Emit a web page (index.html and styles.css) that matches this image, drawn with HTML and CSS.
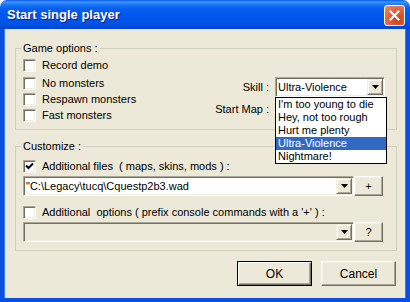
FILE: index.html
```html
<!DOCTYPE html>
<html lang="en">
<head>
    <meta charset="utf-8">
    <title>Start single player</title>
    <link rel="stylesheet" href="styles.css">
</head>
<body>
    <div class="window">
        <div class="titlebar">
            <span class="title">Start single player</span>
            <button class="close" aria-label="Close">
                <svg width="11" height="11" viewBox="0 0 11 11"><path d="M1.5 1.5l8 8M9.5 1.5l-8 8" stroke="#fff" stroke-width="2" stroke-linecap="square"/></svg>
            </button>
        </div>

        <div class="dialog">
            <fieldset class="group game">
                <legend>Game options :</legend>
                <div class="game-row">
                    <div class="checks">
                        <label class="check first"><span class="box"></span>Record demo</label>
                        <label class="check"><span class="box"></span>No monsters</label>
                        <label class="check"><span class="box"></span>Respawn monsters</label>
                        <label class="check"><span class="box"></span>Fast monsters</label>
                    </div>
                    <div class="settings">
                        <span class="setting-label">Skill :</span>
                        <div class="combo skill">
                            <span class="combo-text">Ultra-Violence</span>
                            <span class="arrow-btn"><svg width="7" height="4" viewBox="0 0 7 4"><path d="M0 0h7L3.5 4z"/></svg></span>
                            <ul class="droplist">
                                <li>I'm too young to die</li>
                                <li>Hey, not too rough</li>
                                <li>Hurt me plenty</li>
                                <li class="selected">Ultra-Violence</li>
                                <li>Nightmare!</li>
                            </ul>
                        </div>
                        <span class="setting-label">Start Map :</span>
                        <div class="combo skill">
                            <span class="combo-text"></span>
                            <span class="arrow-btn"><svg width="7" height="4" viewBox="0 0 7 4"><path d="M0 0h7L3.5 4z"/></svg></span>
                        </div>
                    </div>
                </div>
            </fieldset>

            <fieldset class="group custom">
                <legend>Customize :</legend>
                <label class="check"><span class="box"><svg width="11" height="11" viewBox="0 0 11 11"><path d="M2 4.5l2.5 2.5 4.5-4.5" fill="none" stroke="#000" stroke-width="2"/></svg></span>Additional files  ( maps, skins, mods ) :</label>
                <div class="field-row">
                    <div class="combo wide">
                        <span class="combo-text">"C:\Legacy\tucq\Cquestp2b3.wad</span>
                        <span class="arrow-btn"><svg width="7" height="4" viewBox="0 0 7 4"><path d="M0 0h7L3.5 4z"/></svg></span>
                    </div>
                    <button class="btn small">+</button>
                </div>
                <label class="check second"><span class="box"></span>Additional  options ( prefix console commands with a '+' ) :</label>
                <div class="field-row">
                    <div class="combo wide disabled">
                        <span class="combo-text"></span>
                        <span class="arrow-btn"><svg width="7" height="4" viewBox="0 0 7 4"><path d="M0 0h7L3.5 4z"/></svg></span>
                    </div>
                    <button class="btn small">?</button>
                </div>
            </fieldset>

            <div class="actions">
                <button class="btn push default">OK</button>
                <button class="btn push">Cancel</button>
            </div>
        </div>
    </div>
</body>
</html>
```

FILE: styles.css
```css
* {
    box-sizing: border-box;
}
body {
    margin: 0;
    font-family: "Liberation Sans", Arial, sans-serif;
    font-size: 11px;
    color: #000;
}
.window {
    width: 410px;
    height: 302px;
    display: flex;
    flex-direction: column;
    overflow: hidden;
}
.titlebar {
    height: 29px;
    display: flex;
    align-items: center;
    justify-content: space-between;
    padding: 0 5px 0 7px;
    border-radius: 7px 7px 0 0;
    background: linear-gradient(to bottom, #0a5ae8 0%, #3d95ff 7%, #1f7cf6 14%, #0761f0 28%, #0058ee 45%, #0055e8 75%, #004ede 90%, #0044d0 100%);
}
.title {
    color: #fff;
    font-weight: bold;
    font-size: 13px;
    text-shadow: 1px 1px #0b1f8a;
}
.close {
    width: 21px;
    height: 21px;
    margin-top: 1px;
    padding: 0;
    display: flex;
    align-items: center;
    justify-content: center;
    border: 1px solid #fff;
    border-radius: 3px;
    background: radial-gradient(circle at 70% 75%, #cc4119 0%, #e2643e 55%, #f08d6d 100%);
}
.dialog {
    flex: 1;
    background-color: #ece9d8;
    border: 4px solid #0a50e0;
    border-top: 0;
    box-shadow: inset 1px 0 #3a7df5, inset -1px 0 #3a7df5;
    padding: 13px 9px 0 11px;
}
.group {
    margin: 0;
    border: 1px solid #d0d0bf;
    padding: 2px 11px 6px 7px;
}
.group legend {
    padding: 0 2px;
    margin-left: -2px;
    line-height: 13px;
}
.custom {
    margin-top: 10px;
    padding-top: 5px;
    padding-bottom: 8px;
}
.game-row {
    display: flex;
    align-items: flex-start;
}
.check {
    display: flex;
    align-items: center;
    gap: 6px;
    height: 16px;
    white-space: pre;
}
.check.first {
    margin-bottom: 2px;
}
.check.second {
    margin-top: 8px;
}
.box {
    width: 13px;
    height: 13px;
    flex: none;
    display: flex;
    align-items: center;
    justify-content: center;
    background-color: #fff;
    border: 1px solid;
    border-color: #aca899 #fff #fff #aca899;
    box-shadow: inset 1px 1px #716f64, inset -1px -1px #f1efe2;
}
.settings {
    margin-left: auto;
    margin-top: 20px;
    display: grid;
    grid-template-columns: auto 110px;
    column-gap: 6px;
    row-gap: 2px;
    align-items: center;
}
.setting-label {
    text-align: right;
}
.combo {
    position: relative;
    display: flex;
    height: 20px;
    padding: 1px;
    background-color: #fff;
    border: 1px solid;
    border-color: #aca899 #fff #fff #aca899;
    box-shadow: inset 1px 1px #716f64, inset -1px -1px #f1efe2;
}
.combo.disabled {
    background-color: #ece9d8;
}
.combo-text {
    flex: 1;
    padding-left: 1px;
    line-height: 16px;
    white-space: nowrap;
    overflow: hidden;
}
.arrow-btn {
    width: 16px;
    height: 16px;
    flex: none;
    display: flex;
    align-items: center;
    justify-content: center;
    background-color: #ece9d8;
    border: 1px solid;
    border-color: #f1efe2 #716f64 #716f64 #f1efe2;
    box-shadow: inset 1px 1px #fff, inset -1px -1px #aca899;
}
.droplist {
    position: absolute;
    top: calc(100% + 1px);
    left: -1px;
    width: 112px;
    margin: 0;
    padding: 0;
    list-style: none;
    background-color: #fff;
    border: 1px solid #000;
    z-index: 2;
}
.droplist li {
    height: 13px;
    line-height: 13px;
    padding-left: 2px;
    white-space: nowrap;
}
.droplist li.selected {
    background-color: #316ac5;
    color: #fff;
}
.field-row {
    display: flex;
    margin-top: 2px;
}
.combo.wide {
    width: 331px;
}
.btn {
    font: inherit;
    color: #000;
    padding: 0;
    background-color: #ece9d8;
    border: 1px solid;
    border-color: #fff #716f64 #716f64 #fff;
    box-shadow: inset -1px -1px #aca899, inset 1px 1px #f1efe2;
}
.btn.small {
    width: 29px;
    height: 20px;
}
.actions {
    display: flex;
    justify-content: flex-end;
    gap: 9px;
    margin-top: 10px;
    margin-right: 1px;
}
.btn.push {
    width: 75px;
    height: 25px;
    font-size: 12px;
}
.btn.default {
    border-color: #000;
    box-shadow: inset 1px 1px #fff, inset -1px -1px #716f64, inset -2px -2px #aca899;
}
```
